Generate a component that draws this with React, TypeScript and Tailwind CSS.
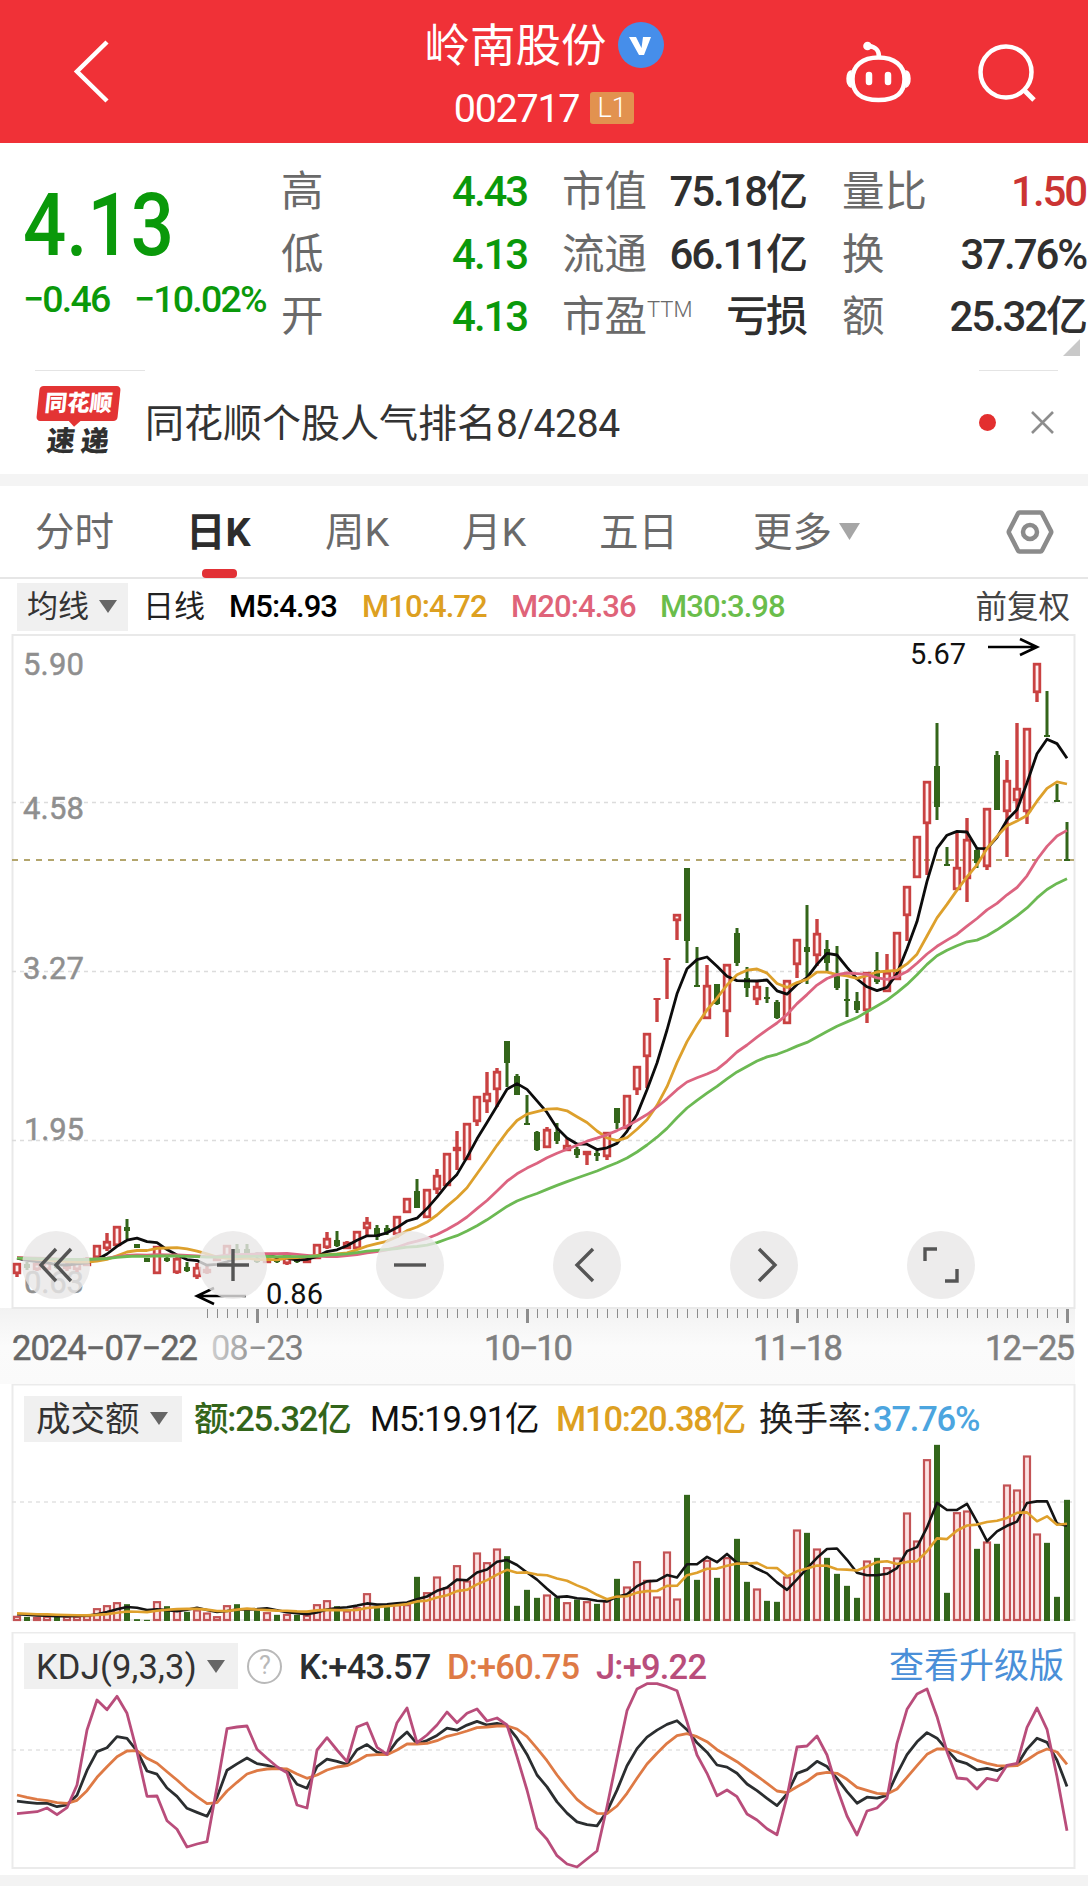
import React from 'react'

type Candle = [string, number, number, number, number]

// [colour, body top, body bottom, high, low]
const candles: Candle[] = [
  ['r', 1263, 1274, 1263, 1277], ['g', 1264, 1268, 1262, 1270], ['r', 1263, 1270, 1261, 1271], ['r', 1262, 1270, 1262, 1270],
  ['g', 1262, 1268, 1260, 1269], ['r', 1264, 1269, 1262, 1271], ['r', 1262, 1270, 1262, 1272], ['r', 1258, 1266, 1257, 1266],
  ['r', 1245, 1258, 1245, 1258], ['r', 1241, 1249, 1233, 1251], ['r', 1226, 1246, 1226, 1246], ['g', 1227, 1231, 1219, 1239],
  ['g', 1244, 1248, 1244, 1248], ['g', 1258, 1262, 1258, 1262], ['r', 1246, 1274, 1246, 1274], ['g', 1258, 1261, 1255, 1262],
  ['r', 1258, 1273, 1257, 1274], ['g', 1267, 1271, 1262, 1272], ['r', 1267, 1277, 1263, 1279], ['r', 1269, 1273, 1264, 1274],
  ['r', 1257, 1261, 1257, 1261], ['r', 1245, 1258, 1245, 1258], ['g', 1249, 1253, 1244, 1258], ['g', 1249, 1253, 1244, 1254],
  ['g', 1258, 1262, 1257, 1263], ['r', 1259, 1263, 1258, 1263], ['g', 1259, 1262, 1258, 1263], ['r', 1255, 1264, 1255, 1265],
  ['g', 1258, 1262, 1258, 1263], ['r', 1259, 1263, 1257, 1263], ['r', 1244, 1259, 1244, 1259], ['r', 1238, 1248, 1232, 1249],
  ['g', 1240, 1246, 1231, 1247], ['r', 1242, 1249, 1241, 1249], ['r', 1231, 1249, 1231, 1249], ['r', 1222, 1229, 1217, 1237],
  ['g', 1228, 1237, 1225, 1240], ['g', 1228, 1232, 1225, 1235], ['r', 1216, 1235, 1216, 1238], ['r', 1198, 1213, 1198, 1213],
  ['g', 1191, 1208, 1179, 1208], ['r', 1189, 1218, 1189, 1218], ['r', 1175, 1190, 1169, 1194], ['r', 1153, 1186, 1153, 1186],
  ['r', 1147, 1151, 1131, 1170], ['r', 1123, 1160, 1123, 1160], ['r', 1096, 1122, 1096, 1126], ['r', 1093, 1102, 1072, 1113],
  ['r', 1071, 1090, 1068, 1107], ['g', 1041, 1063, 1041, 1087], ['g', 1076, 1095, 1074, 1095], ['g', 1123, 1125, 1095, 1125],
  ['g', 1132, 1150, 1131, 1151], ['r', 1129, 1148, 1127, 1148], ['g', 1132, 1141, 1123, 1144], ['r', 1145, 1151, 1138, 1151],
  ['g', 1149, 1155, 1147, 1158], ['r', 1151, 1155, 1151, 1165], ['g', 1153, 1156, 1150, 1161], ['r', 1132, 1157, 1132, 1160],
  ['g', 1108, 1123, 1108, 1129], ['r', 1095, 1129, 1095, 1129], ['r', 1066, 1090, 1066, 1095], ['r', 1033, 1057, 1033, 1088],
  ['r', 998, 1000, 998, 1022], ['r', 958, 960, 958, 999], ['r', 914, 921, 914, 940], ['g', 868, 941, 868, 963],
  ['g', 985, 987, 947, 987], ['r', 985, 1019, 965, 1019], ['g', 984, 1004, 984, 1005], ['r', 964, 1012, 964, 1037],
  ['g', 933, 963, 928, 966], ['g', 978, 988, 967, 997], ['r', 986, 1000, 980, 1005], ['g', 997, 999, 987, 1003],
  ['g', 1002, 1018, 1000, 1019], ['r', 980, 1024, 980, 1024], ['r', 939, 965, 939, 978], ['g', 947, 952, 905, 984],
  ['r', 933, 956, 919, 966], ['g', 949, 963, 940, 972], ['g', 975, 988, 946, 990], ['g', 999, 1001, 979, 1017],
  ['g', 1001, 1010, 992, 1013], ['r', 972, 1011, 972, 1023], ['g', 970, 982, 952, 984], ['r', 972, 992, 954, 992],
  ['r', 932, 980, 932, 980], ['r', 886, 916, 886, 941], ['r', 836, 878, 836, 878], ['r', 781, 824, 781, 875],
  ['g', 766, 807, 723, 820], ['g', 864, 866, 847, 866], ['r', 867, 890, 833, 890], ['r', 839, 879, 818, 902],
  ['g', 850, 863, 847, 868], ['r', 808, 867, 808, 870], ['g', 755, 810, 751, 810], ['r', 780, 812, 760, 857],
  ['r', 788, 801, 723, 819], ['r', 728, 812, 728, 824], ['r', 663, 693, 663, 702], ['g', 735, 737, 691, 737],
  ['g', 800, 802, 784, 802], ['g', 859, 861, 822, 861],
]

const volumes = [
  14, 11, 11, 14, 14, 14, 14, 16, 37, 46, 55, 49, 4, 2, 58, 43, 32, 26, 33, 24, 13, 46, 49, 33, 30, 25, 17, 20, 17, 17,
  49, 61, 43, 30, 40, 82, 43, 46, 49, 49, 131, 85, 132, 100, 166, 120, 204, 175, 216, 193, 44, 92, 68, 78, 69, 55, 63,
  58, 50, 60, 125, 102, 178, 122, 72, 207, 66, 377, 122, 182, 128, 190, 245, 116, 96, 59, 56, 132, 273, 263, 216, 188,
  140, 104, 68, 180, 188, 160, 189, 324, 240, 484, 527, 83, 325, 330, 215, 237, 230, 408, 393, 495, 261, 233, 71, 362,
]

const jRaw = [
  581, 578, 575, 564, 584, 563, 495, 330, 240, 269, 229, 280, 395, 529, 528, 602, 628, 681, 672, 665, 500, 326, 321, 318,
  388, 415, 440, 458, 555, 564, 390, 353, 390, 425, 321, 309, 382, 403, 308, 264, 368, 345, 315, 276, 308, 280, 267, 303,
  294, 315, 410, 510, 625, 658, 707, 732, 741, 717, 693, 560, 415, 272, 207, 191, 191, 200, 212, 305, 405, 460, 527, 510,
  530, 582, 600, 626, 644, 530, 381, 378, 348, 405, 505, 588, 645, 573, 564, 535, 370, 268, 222, 207, 290, 395, 474, 477,
  507, 475, 482, 436, 430, 322, 264, 328, 470, 632,
]

const dRaw = [
  525, 532, 538, 542, 548, 550, 541, 512, 472, 440, 410, 393, 392, 415, 430, 455, 480, 507, 530, 551, 548, 513, 487, 462,
  452, 447, 446, 447, 462, 475, 465, 450, 441, 437, 423, 406, 404, 404, 390, 372, 372, 370, 362, 349, 342, 333, 323, 321,
  318, 318, 327, 350, 385, 422, 465, 503, 538, 562, 580, 581, 558, 520, 475, 432, 400, 370, 347, 341, 350, 365, 389, 407,
  425, 447, 468, 490, 513, 518, 500, 484, 462, 457, 460, 478, 502, 511, 520, 522, 507, 472, 437, 403, 387, 387, 396, 408,
  421, 430, 437, 438, 437, 420, 400, 387, 396, 433,
]

const RED = '#c94141'
const GREEN = '#33651a'

const px = (i: number) => 17 + i * 10

const average = (data: number[], n: number, before: number) =>
  data.map((_, i) => {
    let sum = 0
    for (let k = i - n + 1; k <= i; k++) sum += k < 0 ? before : data[k]
    return sum / n
  })

const toPoints = (ys: number[]) => ys.map((y, i) => `${px(i)},${y.toFixed(1)}`).join(' ')

const closes = candles.map(c => (c[0] === 'r' ? c[1] : c[2]))
const volumeY = (v: number) => 1620.5 - v / 3
const dLine = dRaw.map(v => 1620 + v / 3)
const jLine = jRaw.map(v => 1620 + v / 3)
const kLine = jLine.map((j, i) => (j + 2 * dLine[i]) / 3)

function Line({ ys, color, width = 2.8 }: { ys: number[]; color: string; width?: number }) {
  return <polyline points={toPoints(ys)} fill="none" stroke={color} strokeWidth={width} strokeLinejoin="round" />
}

function Triangle({ className }: { className: string }) {
  return (
    <svg viewBox="0 0 18 13" className={className} preserveAspectRatio="none">
      <path d="M0 0H18L9 13Z" fill="currentColor" />
    </svg>
  )
}

function Header() {
  return (
    <header className="relative h-[143px] bg-[#f03137] text-white">
      <div className="flex h-full flex-col items-center">
        <div className="mt-[22px] flex h-[46px] items-center gap-[11px]">
          <span className="pt-[3px] text-[45.5px] leading-[46px]">岭南股份</span>
          <svg width="46" height="46" viewBox="0 0 46 46">
            <circle cx="23" cy="23" r="23" fill="#468eea" />
            <path d="M11 15h7l5.500 11 1.500-11h8l-7 18h-5z" fill="#fff" />
          </svg>
        </div>
        <div className="mt-[23px] flex h-[34px] items-center gap-[11px]">
          <span className="pt-[2px] text-[39.5px] leading-[34px] tracking-[-1.3px]">002717</span>
          <span className="flex h-[32px] w-[44px] items-center justify-center rounded-[3px] bg-[#e2924f] text-[27px] font-light">L1</span>
        </div>
      </div>
      <svg className="absolute left-[70px] top-[36px]" width="42" height="70" viewBox="70 36 42 70" fill="none" stroke="#fff" strokeWidth="4.500">
        <path d="M107 42 77 71.500 107 101" />
      </svg>
      <svg className="absolute left-[840px] top-[36px]" width="210" height="72" viewBox="840 36 210 72" fill="none" stroke="#fff" strokeWidth="4.500">
        <path d="M878.500 57.500c16 0 26 8 26 21.500 0 14-8 21-26 21s-26-7-26-21c0-13.500 10-21.500 26-21.500Z" />
        <path d="M879 57c0-7-3-10-10-11" />
        <circle cx="867.500" cy="46" r="4.300" fill="#fff" stroke="none" />
        <path d="M851 71c-5 1-5.500 14 0 16zM906 71c5 1 5.500 14 0 16z" fill="#fff" strokeWidth="1.500" />
        <path d="M869 75v7M888 75v7" strokeWidth="6.500" strokeLinecap="round" />
        <circle cx="1006" cy="72" r="25.500" />
        <path d="M1024 90l10 10" strokeWidth="5" />
      </svg>
    </header>
  )
}

function Stat({ label, sup, value, color = 'text-[#2f2f2f]' }: { label: string; sup?: string; value: string; color?: string }) {
  return (
    <div className="flex h-[62.5px] items-center justify-between whitespace-nowrap">
      <span className="flex text-[42.5px] leading-[62px] text-[#6a6a6a]">
        {label}
        {sup && <sup className="relative top-[-7px] text-[22px] font-light leading-[62px]">{sup}</sup>}
      </span>
      <span className={`text-[42px] font-medium leading-[62px] tracking-tighter ${color}`}>{value}</span>
    </div>
  )
}

function Quote() {
  return (
    <section className="relative flex h-[227px] pt-[18px]">
      <div className="w-[281px] shrink-0 pl-[23px] text-[#0a990a]">
        <div className="mt-[18px] h-[92px] origin-left scale-x-[.875] text-[87px] font-medium leading-[92px]">4.13</div>
        <div className="mt-[7px] flex text-[37.500px] font-medium leading-[42px] tracking-[-1.800px]">
          <span className="w-[111px]">−0.46</span>
          <span>−10.02%</span>
        </div>
      </div>
      <div className="w-[246px]">
        <Stat label="高" value="4.43" color="text-[#0a990a]" />
        <Stat label="低" value="4.13" color="text-[#0a990a]" />
        <Stat label="开" value="4.13" color="text-[#0a990a]" />
      </div>
      <div className="ml-[35px] w-[244px]">
        <Stat label="市值" value="75.18亿" />
        <Stat label="流通" value="66.11亿" />
        <Stat label="市盈" sup="TTM" value="亏损" />
      </div>
      <div className="ml-[36px] w-[244px]">
        <Stat label="量比" value="1.50" color="text-[#cb3433]" />
        <Stat label="换" value="37.76%" />
        <Stat label="额" value="25.32亿" />
      </div>
      <svg className="absolute bottom-[14px] left-[1063px]" width="17" height="17">
        <path d="M17 0V17H0Z" fill="#c9c9c9" />
      </svg>
    </section>
  )
}

function News() {
  return (
    <section className="relative flex h-[104px] items-center">
      <div className="absolute left-[35px] top-0 h-[1px] w-[110px] bg-[#e4e4e4]" />
      <div className="absolute left-[979px] top-0 h-[1px] w-[79px] bg-[#e4e4e4]" />
      <div className="ml-[35px] flex w-[86px] flex-col items-center">
        <div className="relative flex h-[35px] w-[81px] -skew-x-6 items-center justify-center rounded-[4px] bg-[#e33434] text-[22.500px] font-black leading-none text-white">
          同花顺
          <div className="absolute -bottom-[4px] left-[34px] h-[9px] w-[9px] rotate-45 bg-[#e33434]" />
        </div>
        <div className="mt-[5px] flex h-[32px] -skew-x-6 items-center gap-[6px] text-[28px] font-black leading-none text-[#303030]">
          <span>速</span>
          <span>递</span>
        </div>
      </div>
      <span className="ml-[24px] pt-[3px] text-[39px] leading-[50px] text-[#333]">
        同花顺个股人气排名<span className="tracking-[-0.3px]">8/4284</span>
      </span>
      <div className="ml-auto mr-[35px] h-[17px] w-[17px] rounded-full bg-[#e32f2f]" />
      <svg className="mr-[34px]" width="23" height="23" viewBox="0 0 23 23" stroke="#8d8d8d" strokeWidth="2.600">
        <path d="M1 1 22 22M22 1 1 22" />
      </svg>
    </section>
  )
}

function Tabs() {
  return (
    <nav className="relative flex h-[93px] items-center border-b-2 border-[#e6e6e6] pl-[35px] text-[39.500px] leading-[50px] text-[#6a6a6a]">
      <span className="w-[151px] pt-[3px]">分时</span>
      <span className="w-[139px] pt-[3px] font-bold text-[#2d2d2d]">日K</span>
      <span className="w-[137px] pt-[3px]">周K</span>
      <span className="w-[137px] pt-[3px]">月K</span>
      <span className="w-[154px] pt-[3px]">五日</span>
      <span className="pt-[3px]">更多</span>
      <Triangle className="ml-[7px] h-[17px] w-[21px] text-[#a6a6a6]" />
      <svg className="ml-auto mr-[34px]" width="48" height="46" viewBox="0 0 48 46" fill="none" stroke="#8b8b8b">
        <path d="M13.500 3.500h21q1 0 1.500 1L45 22q.5 1 0 2L36 41.500q-.5 1-1.500 1h-21q-1 0-1.500-1L3 24q-.5-1 0-2L12 4.500q.5-1 1.500-1Z" strokeWidth="4.500" />
        <circle cx="24" cy="23" r="7" strokeWidth="4.500" />
      </svg>
      <div className="absolute -bottom-[1px] left-[202px] h-[9px] w-[35px] rounded-[4px] bg-[#e23136]" />
    </nav>
  )
}

function Averages() {
  return (
    <div className="flex h-[55px] items-center whitespace-nowrap text-[31px] leading-[40px]">
      <div className="ml-[17px] flex h-[48px] w-[111px] items-center bg-[#f0f0f0] pl-[10px] text-[#333]">
        <span className="pt-[1px]">均线</span>
        <Triangle className="ml-[10px] h-[13px] w-[18px] text-[#666]" />
      </div>
      <span className="ml-[15px] w-[86px] pt-[1px] text-[#222]">日线</span>
      <span className="w-[133px] pt-[1px] font-medium tracking-[-0.900px] text-black">M5:4.93</span>
      <span className="w-[149px] pt-[1px] font-medium tracking-[-0.900px] text-[#dda021]">M10:4.72</span>
      <span className="w-[149px] pt-[1px] font-medium tracking-[-0.900px] text-[#df6379]">M20:4.36</span>
      <span className="pt-[1px] font-medium tracking-[-0.900px] text-[#6abd4b]">M30:3.98</span>
      <span className="ml-auto mr-[18px] pt-[2px] text-[31.500px] text-[#444]">前复权</span>
    </div>
  )
}

const controls = [
  'M0-16-15 0 0 16M15-16 0 0 15 16',
  'M-16 0H16M0-16V16',
  'M-16 0H16',
  'M6-16-10 0 6 16',
  'M-5-16 11 0-5 16',
  'M-16-4V-16H-4M16 4V16H4',
]

function KChart() {
  const ticks = Array.from({ length: 87 }, (_, i) => 207 + i * 10)
  return (
    <section className="relative h-[750px]">
      <svg className="block" width="1088" height="750" viewBox="0 634 1088 750" fontFamily="Roboto, sans-serif">
        <defs>
          <linearGradient id="axis" x1="0" y1="0" x2="0" y2="1">
            <stop offset="0" stopColor="#f2f2f2" />
            <stop offset=".5" stopColor="#fbfbfb" />
            <stop offset="1" stopColor="#fafafa" />
          </linearGradient>
          <linearGradient id="fade" x1="0" y1="0" x2="1" y2="0">
            <stop offset="0" stopColor="#cfcfcf" />
            <stop offset=".5" stopColor="#8f8f8f" />
            <stop offset="1" stopColor="#7d7d7d" />
          </linearGradient>
        </defs>
        <rect x="0" y="1308" width="1075" height="76" fill="url(#axis)" />
        <rect x="12.500" y="635" width="1062" height="673" fill="#fff" stroke="#e9e9e9" strokeWidth="2" />
        <g stroke="#dcdcdc" strokeWidth="1.300" strokeDasharray="4 4">
          <path d="M12 802.500H1075M12 971.500H1075M12 1140.500H1075" />
        </g>
        <path d="M12 860H1075" stroke="#b3a56c" strokeWidth="1.800" strokeDasharray="6 6" />

        <g fontSize="31" fill="#8f8f8f" stroke="#8f8f8f" strokeWidth=".5">
          <text x="23" y="675" textLength="61">5.90</text>
          <text x="23" y="819" textLength="61">4.58</text>
          <text x="23" y="979" textLength="61">3.27</text>
          <text x="24" y="1140" textLength="60">1.95</text>
          <text x="24" y="1293" textLength="60">0.63</text>
        </g>

        {candles.map(([c, top, bottom, high, low], i) => {
          const x = px(i)
          const h = bottom - top
          if (c === 'g') {
            return (
              <g key={i} fill={GREEN}>
                <rect x={x - 1.500} y={high} width="3" height={low - high} />
                <rect x={x - 3} y={top} width="6" height={Math.max(h, 2)} />
              </g>
            )
          }
          return (
            <g key={i}>
              <rect x={x - 1.700} y={high} width="3.400" height={top - high} fill={RED} />
              <rect x={x - 1.700} y={bottom} width="3.400" height={low - bottom} fill={RED} />
              {h < 4 ? (
                <rect x={x - 3.500} y={top} width="7" height={Math.max(h, 2)} fill={RED} />
              ) : (
                <rect x={x - 2.800} y={top + 1.200} width="5.600" height={h - 2.400} fill="#fff0f0" stroke={RED} strokeWidth="2.800" />
              )}
            </g>
          )
        })}

        <Line ys={average(closes, 5, 1257)} color="#0c0c0c" />
        <Line ys={average(closes, 10, 1257)} color="#dda02c" />
        <Line ys={average(closes, 20, 1257)} color="#dc6480" />
        <Line ys={average(closes, 30, 1258)} color="#6cb953" />

        <g fontSize="29" fill="#111">
          <text x="910" y="664" textLength="56">5.67</text>
          <text x="266" y="1304" textLength="57">0.86</text>
        </g>
        <path d="M988 647H1036M1020 639 1037 647 1020 655" fill="none" stroke="#000" strokeWidth="2.600" />
        <path d="M246 1296H198M214 1288 197 1296 214 1304" fill="none" stroke="#000" strokeWidth="2.600" />

        {ticks.map((x, i) => (
          <rect
            key={x}
            x={(i - 5) % 27 === 0 ? x - 1 : x}
            y="1309"
            width={(i - 5) % 27 === 0 || i === 86 ? 3 : 1}
            height={(i - 5) % 27 === 0 || i === 86 ? 14 : 9}
            fill="#8c8c8c"
          />
        ))}
        <g fontSize="34.500" fill="#808080">
          <text x="12" y="1360" textLength="186" fill="#666" stroke="#666" strokeWidth=".5">2024−07−22</text>
          <text x="211" y="1360" textLength="93" fill="url(#fade)">08−23</text>
          <text x="484" y="1360" textLength="89" stroke="#808080" strokeWidth=".5">10−10</text>
          <text x="753" y="1360" textLength="90" stroke="#808080" strokeWidth=".5">11−18</text>
          <text x="985" y="1360" textLength="90" stroke="#808080" strokeWidth=".5">12−25</text>
        </g>
      </svg>
      <div className="absolute left-[22px] top-[597px] flex gap-[109px]">
        {controls.map(d => (
          <button key={d} className="flex h-[68px] w-[68px] items-center justify-center rounded-full bg-[#e9e7e7]/80">
            <svg width="48" height="48" viewBox="-24 -24 48 48" fill="none" stroke="#555" strokeWidth="3.400">
              <path d={d} />
            </svg>
          </button>
        ))}
      </div>
    </section>
  )
}

function VolumeChart() {
  return (
    <section className="relative h-[248px]">
      <svg className="absolute inset-0" width="1088" height="248" viewBox="0 1384 1088 248">
        <rect x="12.500" y="1384.500" width="1062" height="235.500" fill="none" stroke="#ebebeb" strokeWidth="2" />
        <path d="M12 1507.500H1075" stroke="#e2e2e2" strokeWidth="0" />
        <path d="M12 1502H1075" stroke="#e2e2e2" strokeWidth="1.300" strokeDasharray="4 4" />
        {volumes.map((v, i) => {
          const y = volumeY(v)
          return candles[i][0] === 'g' ? (
            <rect key={i} x={px(i) - 3} y={y} width="6" height={v / 3 + 0.5} fill="#33661b" />
          ) : (
            <rect key={i} x={px(i) - 3} y={y + 1} width="6" height={Math.max(v / 3 - 1.500, 1)} fill="#fbe3e3" stroke="#c35355" strokeWidth="2.200" />
          )
        })}
        <Line ys={average(volumes, 5, 20).map(volumeY)} color="#141414" width={2.600} />
        <Line ys={average(volumes, 10, 22).map(volumeY)} color="#dfa02c" width={2.600} />
      </svg>
      <div className="relative flex h-[69px] items-center whitespace-nowrap text-[34.500px] leading-[44px] tracking-[-1.200px]">
        <div className="ml-[24px] flex h-[46px] w-[158px] items-center bg-[#f0f0f0] pl-[12px] tracking-normal text-[#333]">
          成交额
          <Triangle className="ml-[10px] h-[13px] w-[18px] text-[#666]" />
        </div>
        <span className="ml-[12px] w-[176px] font-medium text-[#33651a]">额:25.32亿</span>
        <span className="w-[186px] text-[#111]">M5:19.91亿</span>
        <span className="w-[203px] font-medium text-[#dda021]">M10:20.38亿</span>
        <span className="w-[114px] tracking-normal text-[#222]">换手率:</span>
        <span className="font-medium text-[#4ca5df]">37.76%</span>
      </div>
    </section>
  )
}

function KdjChart() {
  return (
    <section className="relative h-[243px]">
      <svg className="absolute inset-0" width="1088" height="243" viewBox="0 1632 1088 243">
        <rect x="12.500" y="1632.500" width="1062" height="235.500" fill="none" stroke="#ebebeb" strokeWidth="2" />
        <path d="M12 1750H1075" stroke="#e2e2e2" strokeWidth="1.300" strokeDasharray="4 4" />
        <Line ys={kLine} color="#2b2e30" />
        <Line ys={dLine} color="#de7a45" />
        <Line ys={jLine} color="#b94d7b" />
      </svg>
      <div className="relative flex h-[68px] items-center whitespace-nowrap text-[34.500px] leading-[44px] tracking-[-0.800px]">
        <div className="ml-[24px] flex h-[46px] w-[214px] items-center bg-[#f0f0f0] pl-[12px] text-[#333]">
          <span className="w-[171px] pt-[2px] tracking-[0.200px]">KDJ(9,3,3)</span>
          <Triangle className="h-[13px] w-[18px] text-[#666]" />
        </div>
        <span className="ml-[9px] flex h-[35px] w-[35px] items-center justify-center rounded-full border-2 border-[#b9b9b9] text-[25px] text-[#b9b9b9]">?</span>
        <span className="ml-[17px] w-[148px] pt-[2px] font-medium text-[#2b2e30]">K:+43.57</span>
        <span className="w-[149px] pt-[2px] font-medium text-[#de7a45]">D:+60.75</span>
        <span className="pt-[2px] font-medium text-[#b94d7b]">J:+9.22</span>
        <span className="ml-auto mr-[24px] pt-[2px] text-[35px] tracking-normal text-[#4a8fd8]">查看升级版</span>
      </div>
    </section>
  )
}

export default function App() {
  return (
    <div className="h-[1886px] w-[1088px] overflow-hidden bg-white font-[Roboto,'Noto_Sans_CJK_SC',sans-serif]">
      <Header />
      <Quote />
      <News />
      <div className="h-[12px] bg-[#f4f4f4]" />
      <Tabs />
      <Averages />
      <KChart />
      <VolumeChart />
      <KdjChart />
      <div className="h-[11px] bg-[#f3f3f3]" />
    </div>
  )
}
